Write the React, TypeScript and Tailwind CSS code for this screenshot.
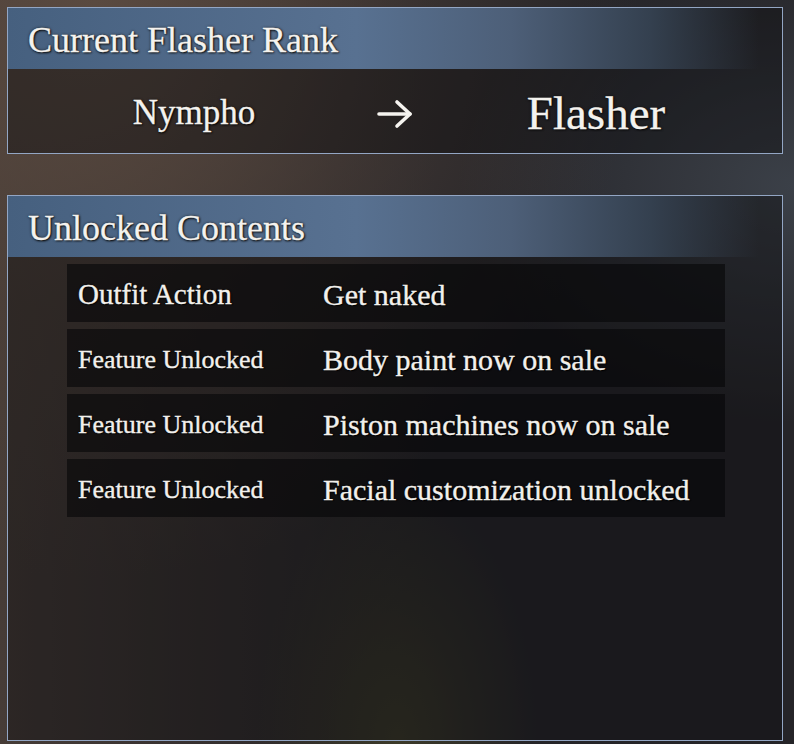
import React from 'react';

const rows = [
    { label: 'Outfit Action', value: 'Get naked', big: true },
    { label: 'Feature Unlocked', value: 'Body paint now on sale', big: false },
    { label: 'Feature Unlocked', value: 'Piston machines now on sale', big: false },
    { label: 'Feature Unlocked', value: 'Facial customization unlocked', big: false },
];

const Header: React.FC<{ title: string }> = ({ title }) => (
    <div className="h-[61px] flex items-center pl-[20px] bg-[linear-gradient(90deg,#46607f_0%,#587191_45%,#4d5f78_65%,#34404f_83%,rgba(30,30,34,0)_97%)]">
        <span className="pt-[2px] text-[36px] leading-none text-[#f4f2ee] [-webkit-text-stroke:0.3px_#f4f2ee] [text-shadow:0_0_3px_#1a1a1a,1px_1px_2px_#000]">
            {title}
        </span>
    </div>
);

const App: React.FC = () => {
    return (
        <div
            className="w-[794px] h-[744px] overflow-hidden pt-[7px] pl-[7px] font-['Liberation_Serif',serif] bg-[#252428]
            bg-[radial-gradient(ellipse_at_12%_0%,#5a4a40_0%,rgba(80,66,58,0.5)_30%,transparent_55%),radial-gradient(ellipse_at_100%_25%,#3b4048_0%,transparent_30%),radial-gradient(ellipse_at_50%_100%,#3c3a28_0%,transparent_25%),linear-gradient(90deg,#463c37_0%,#36302f_25%,transparent_55%)]"
        >
            {/* Rank panel */}
            <div className="w-[776px] border border-[#93a6c4] bg-[rgba(14,14,16,0.45)]">
                <Header title="Current Flasher Rank" />
                <div className="h-[84px] pt-[5px] flex items-center justify-center text-[#f4f2ee] [-webkit-text-stroke:0.3px_#f4f2ee] [text-shadow:0_0_3px_#111,1px_1px_2px_#000]">
                    <div className="w-[362px] text-center text-[35px]">Nympho</div>
                    <div className="w-[40px] flex justify-center">
                        <svg width="38" height="32" viewBox="0 0 38 32" fill="none" stroke="#f6f4f0" strokeWidth="3.6" strokeLinecap="round" strokeLinejoin="round">
                            <path d="M3 16H34" />
                            <path d="M21 4L34 16L21 28" />
                        </svg>
                    </div>
                    <div className="w-[362px] text-center text-[47px]">Flasher</div>
                </div>
            </div>

            {/* Unlocked contents panel */}
            <div className="mt-[41px] w-[776px] h-[546px] border border-[#93a6c4] bg-[rgba(14,14,16,0.45)]">
                <Header title="Unlocked Contents" />
                <div className="pt-[7px] pl-[59px] w-[717px] flex flex-col gap-[7px]">
                    {rows.map((r, i) => (
                        <div
                            key={i}
                            className="h-[58px] grid grid-cols-[245px_1fr] items-center pl-[11px] pt-[3px] bg-[rgba(6,6,8,0.62)] text-[#f2f0ec] [-webkit-text-stroke:0.35px_#f2f0ec] [text-shadow:0_0_2px_#000,1px_1px_1px_#000]"
                        >
                            <span className={r.big ? 'text-[29px]' : 'text-[26px]'}>{r.label}</span>
                            <span className="text-[30px]">{r.value}</span>
                        </div>
                    ))}
                </div>
            </div>
        </div>
    );
};

export default App;
